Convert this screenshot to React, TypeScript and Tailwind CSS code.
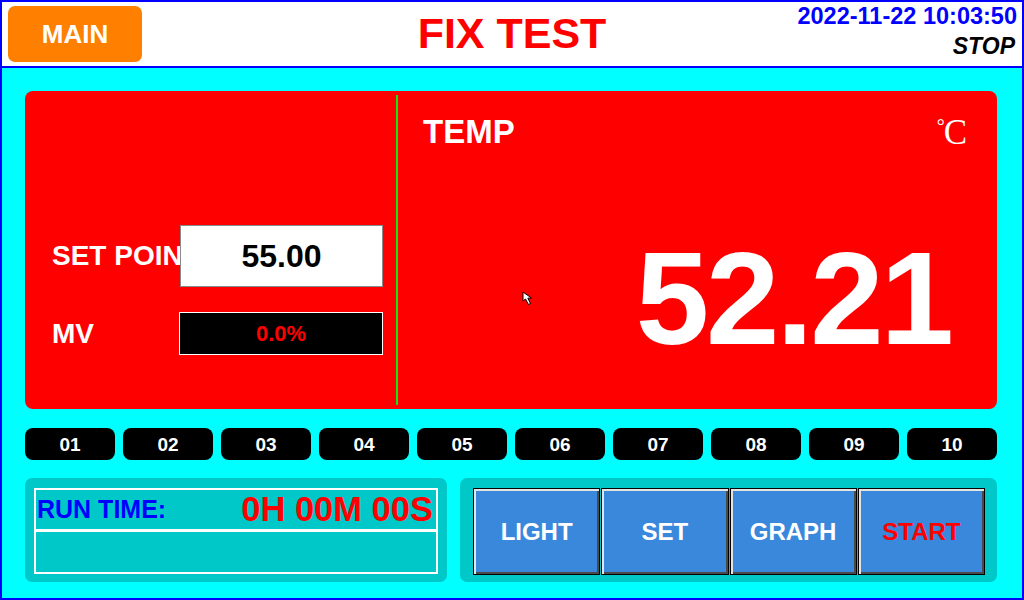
import React from "react";

const channels = ["01", "02", "03", "04", "05", "06", "07", "08", "09", "10"];
const buttons = [
  { label: "LIGHT", red: false },
  { label: "SET", red: false },
  { label: "GRAPH", red: false },
  { label: "START", red: true },
];

function Cursor() {
  return (
    <svg width="14" height="16" viewBox="0 0 14 16" className="absolute left-[124px] top-[200px]">
      <path d="M1 1 L1 10 L3.5 8 L6.5 13.5 L8.5 12.5 L5.8 7.2 L9.5 7 Z" fill="#ffffff" stroke="#000000" strokeWidth="1" strokeLinejoin="miter" />
    </svg>
  );
}

export default function App() {
  return (
    <div
      className="w-[1024px] h-[600px] border-2 border-[#0000ff] flex flex-col overflow-hidden"
      style={{ fontFamily: '"Liberation Sans", Arial, sans-serif' }}
    >
      {/* Header */}
      <div className="h-[66px] bg-white border-b-2 border-[#0000ff] grid grid-cols-3 shrink-0">
        <div className="flex items-center pl-[6px]">
          <div className="w-[134px] h-[56px] rounded-[7px] bg-[#ff8000] flex items-center justify-center text-white font-bold text-[26px] leading-none">
            MAIN
          </div>
        </div>
        <div className="flex items-center justify-center pb-[2px]">
          <span className="text-[#ff0000] font-bold text-[43px] leading-none">FIX TEST</span>
        </div>
        <div className="flex flex-col items-end pr-[5px] pt-[3px]">
          <span className="text-[#0000ff] font-bold text-[23.5px] leading-none">2022-11-22 10:03:50</span>
          <span className="text-black font-bold italic text-[23px] leading-none mt-[6px] pr-[2px]">STOP</span>
        </div>
      </div>

      {/* Body */}
      <div className="flex-1 bg-[#00ffff] pl-[23px] pt-[23px]">
        {/* Main red panel */}
        <div className="w-[972px] h-[318px] bg-[#ff0000] rounded-[8px] flex">
          <div className="w-[371px] pt-[134px] pl-[27px] flex flex-col">
            <div className="flex items-center h-[62px]">
              <div className="w-[128px] overflow-hidden whitespace-nowrap text-white font-bold text-[28px] leading-none">
                SET POINT
              </div>
              <div className="w-[203px] h-[62px] bg-white border border-[#8a8a8a] flex items-center justify-center text-black font-bold text-[32px] leading-none">
                55.00
              </div>
            </div>
            <div className="flex items-center h-[43px] mt-[25px]">
              <div className="w-[127px] text-white font-bold text-[28px] leading-none">MV</div>
              <div className="w-[204px] h-[43px] bg-black border border-white flex items-center justify-center text-[#ff0000] font-bold text-[22px] leading-none">
                0.0%
              </div>
            </div>
          </div>

          <div className="w-[2px] my-[4px] bg-[#11e611]" />

          <div className="relative flex-1 flex flex-col pl-[25px] pr-[24px] pt-[24px]">
            <div className="flex items-start justify-between">
              <span className="text-white font-bold text-[33px] leading-none">TEMP</span>
              <span
                className="text-white leading-none mr-[6px] flex items-start"
                style={{ fontFamily: '"Liberation Serif", "Times New Roman", serif' }}
              >
                <span className="text-[20px] leading-none mt-[1px] -mr-[1px]">°</span>
                <span className="text-[35px] leading-none">C</span>
              </span>
            </div>
            <div className="mt-[83px] pr-[22px] text-right text-white font-bold text-[132px] leading-none tracking-[-3px]">
              52.21
            </div>
            <Cursor />
          </div>
        </div>

        {/* Channel pills */}
        <div className="w-[972px] flex gap-[8px] mt-[19px]">
          {channels.map((c) => (
            <div
              key={c}
              className="flex-1 h-[32px] bg-black rounded-[8px] flex items-center justify-center text-white font-bold text-[19px] leading-none"
            >
              {c}
            </div>
          ))}
        </div>

        {/* Bottom panels */}
        <div className="flex gap-[13px] mt-[18px]">
          <div className="w-[422px] h-[104px] bg-[#00c8c8] rounded-[7px] pt-[10px] px-[9px]">
            <div className="h-[86px] border-2 border-white flex flex-col">
              <div className="h-[39px] flex items-center justify-between pl-[1px] pr-[3px]">
                <span className="text-[#0000ff] font-bold text-[25px] leading-none">RUN TIME:</span>
                <span className="text-[#ff0000] font-bold text-[34.5px] leading-none">0H 00M 00S</span>
              </div>
              <div className="h-[3px] bg-white" />
              <div className="flex-1" />
            </div>
          </div>

          <div className="w-[537px] h-[104px] bg-[#00c8c8] rounded-[7px] pl-[13px] pr-[12px] pt-[10px]">
            <div className="h-[87px] flex gap-[1px]">
              {buttons.map((b) => (
                <div
                  key={b.label}
                  className={
                    "flex-1 bg-[#3a88dc] border border-black shadow-[inset_2px_2px_0_#e4e4e4,inset_-2px_-2px_0_#4a4a4a] flex items-center justify-center font-bold text-[24px] leading-none " +
                    (b.red ? "text-[#ff0000]" : "text-white")
                  }
                >
                  {b.label}
                </div>
              ))}
            </div>
          </div>
        </div>
      </div>
    </div>
  );
}
